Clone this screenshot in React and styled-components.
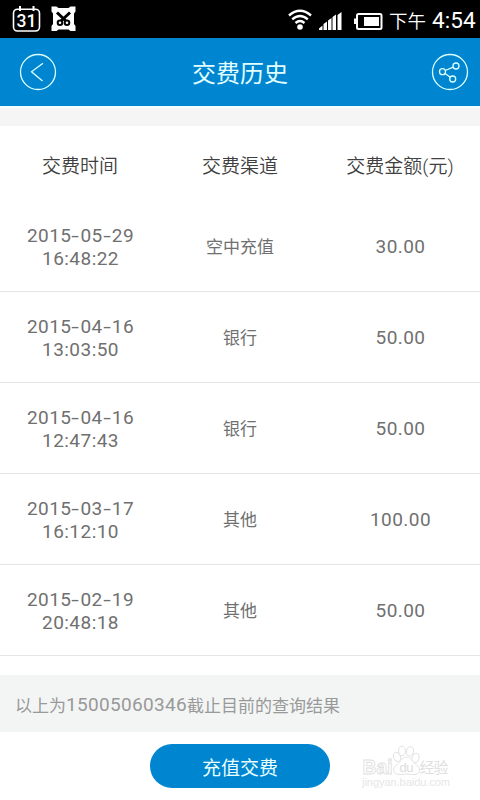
import React from "react";
import styled, { createGlobalStyle } from "styled-components";

const Global = createGlobalStyle`
  * { box-sizing: border-box; }
  body { margin: 0; background: #fff; font-family: Roboto, "Noto Sans CJK SC", sans-serif; }
`;

const Screen = styled.div`
  width: 480px;
  height: 800px;
  display: flex;
  flex-direction: column;
  overflow: hidden;
  background: #fff;
`;

const StatusBar = styled.div`
  height: 38px;
  flex: none;
  display: flex;
  justify-content: space-between;
  background: #000;
  color: #fff;
`;

const StatusGroup = styled.div`
  display: flex;
  align-items: center;
  white-space: nowrap;
`;

const Period = styled.span`
  font-size: 18.5px;
  font-weight: 350;
  line-height: 38px;
  margin: 5px 0 0 5px;
`;

const Clock = styled.span`
  font-size: 22.5px;
  line-height: 38px;
  letter-spacing: 0.1px;
  width: 48px;
  margin: 1px 0 0 6px;
`;

const TitleBar = styled.header`
  height: 68px;
  flex: none;
  display: flex;
  align-items: center;
  justify-content: space-between;
  padding: 0 11px 0 19px;
  background: #0085d0;
`;

const Title = styled.h1`
  margin: 3px 8px 0 0;
  font-size: 24px;
  line-height: 36px;
  font-weight: 400;
  color: #e2ffff;
`;

const IconButton = styled.button`
  width: 38px;
  height: 38px;
  padding: 0;
  border: 0;
  background: none;
  svg { display: block; }
`;

const Divider = styled.div`
  height: 20px;
  flex: none;
  background: #f5f5f5;
  border-top: 2px solid #f0ffff;
`;

const Row = styled.div`
  height: ${(p) => (p.$head ? 75 : 91)}px;
  flex: none;
  display: grid;
  grid-template-columns: repeat(3, 1fr);
  align-items: center;
  text-align: center;
  color: ${(p) => (p.$head ? "#404040" : "#707070")};
  border-bottom: ${(p) => (p.$head ? "0" : "1px solid #e5e5e5")};
`;

const HeadCell = styled.div`
  font-size: 19px;
  line-height: 28px;
  padding-top: 6px;
  font-weight: 350;
`;

const Numeric = styled.div`
  font-size: 19px;
  line-height: 23px;
  letter-spacing: 0.45px;
  padding: 1px 0 0 1px;
`;

const Dash = styled.span`
  display: inline-block;
  width: 9px;
  transform: scaleX(1.45);
`;

const Channel = styled.div`
  font-size: 17px;
  line-height: 24px;
  padding-top: 1px;
`;

const Note = styled.div`
  height: 57px;
  flex: none;
  display: flex;
  align-items: center;
  margin-top: 19px;
  padding: 1px 15px 0;
  background: #f3f5f5;
  color: #999;
  font-size: 17px;
  white-space: nowrap;
`;

const Phone = styled.span`
  font-size: 19px;
  letter-spacing: 0.32px;
`;

const Footer = styled.footer`
  height: 68px;
  display: grid;
  grid-template-columns: 150px 180px 150px;
  padding-top: 12px;
`;

const PayButton = styled.button`
  grid-column: 2;
  height: 44px;
  padding: 5px 0 0;
  border: 0;
  border-radius: 22px;
  background: #0085d0;
  color: #e8ffff;
  font: 400 19px/28px Roboto, "Noto Sans CJK SC", sans-serif;
`;

const Watermark = styled.svg`
  display: block;
  margin: 0 0 0 30px;
`;

const CalendarIcon = () => (
  <svg width="30" height="38" viewBox="0 0 30 38">
    <rect x="1.5" y="9.2" width="26" height="21.8" rx="4" fill="none" stroke="#fff" strokeWidth="1.6" />
    <path d="M8 6v5M21.5 6v5" stroke="#fff" strokeWidth="2" />
    <text x="14.5" y="26.8" fill="#fff" fontSize="17.5" fontWeight="500" textAnchor="middle" fontFamily="Roboto, sans-serif">31</text>
  </svg>
);

const ScissorsIcon = () => (
  <svg width="26" height="38" viewBox="0 0 26 38">
    <path d="M0.5 6.5h5l2 1.5h10l2-1.5h5v5l-1.5 2v10.5l1.5 2v5h-5l-2-1.5h-10l-2 1.5h-5v-5l1.5-2V13.5l-1.5-2z" fill="#fff" />
    <path d="M6 12.500L15 21M19 12.500L10 21" stroke="#000" strokeWidth="3" />
    <circle cx="9" cy="22.8" r="2.3" fill="#fff" stroke="#000" strokeWidth="2" />
    <circle cx="16" cy="22.8" r="2.3" fill="#fff" stroke="#000" strokeWidth="2" />
  </svg>
);

const SignalIcons = () => (
  <svg width="96" height="38" viewBox="0 0 96 38">
    <g fill="none" stroke="#fff" strokeWidth="2.4">
      <path d="M1 15.5Q12 6 23 15.5" />
      <path d="M4.2 19.3Q12 12.5 19.8 19.3" />
      <path d="M7.5 23Q12 19.2 16.5 23" />
    </g>
    <circle cx="12" cy="27" r="2.8" fill="#fff" />
    <path d="M31 30v-1.5l3.500-3v4.500zM35.500 30v-6l3.500-2.500V30zM40 30V20.500l3.500-2.500v12zM44.500 30V17l3.500-2.500V30zM49.500 30V15l4-3V30z" fill="#fff" />
    <rect x="69" y="14" width="24.5" height="15" rx="1.5" fill="none" stroke="#fff" strokeWidth="2" />
    <rect x="66" y="18.5" width="3" height="5.5" fill="#fff" />
    <rect x="76" y="17" width="15" height="9" fill="#fff" />
  </svg>
);

const BackIcon = () => (
  <svg width="38" height="38" viewBox="0 0 38 38" fill="none" stroke="#dcffff" strokeWidth="1.3">
    <circle cx="19" cy="19" r="17.5" />
    <path d="M24 10.3L12.5 18.7L23.5 28" />
  </svg>
);

const ShareIcon = () => (
  <svg width="38" height="38" viewBox="0 0 38 38" fill="none" stroke="#dcffff" strokeWidth="1.3">
    <circle cx="19" cy="19" r="17.5" />
    <circle cx="11.5" cy="18.7" r="3" />
    <circle cx="25" cy="13" r="3" />
    <circle cx="21.7" cy="26" r="3" />
    <path d="M14.3 17.5L22.2 14.2M13.9 20.5L19.4 24.2" />
  </svg>
);

const BaiduWatermark = () => (
  <Watermark width="100" height="48" viewBox="0 0 100 48">
    <g fill="#fff" stroke="#e0e0e0" strokeWidth="0.9">
      <ellipse cx="37" cy="13" rx="3.4" ry="4.7" transform="rotate(-18 37 13)" />
      <ellipse cx="42" cy="7" rx="3.4" ry="4.7" />
      <ellipse cx="50" cy="7.3" rx="3.4" ry="4.7" transform="rotate(12 50 7.3)" />
      <ellipse cx="55.5" cy="14" rx="3.4" ry="4.7" transform="rotate(15 55.5 14)" />
      <path d="M46.5 13C41 13 41 18.5 36.500 21C31 25 34 31 40 30.500Q46.500 29.500 52.500 30.500C60 31.500 61.500 25 57 21.500C52 18 52 13 46.500 13Z" />
      <text x="2.5" y="29.5" fontFamily="Liberation Sans, sans-serif" fontWeight="700" fontSize="21" textLength="30" lengthAdjust="spacingAndGlyphs">Bai</text>
      <text x="39.5" y="28" fontFamily="Liberation Sans, sans-serif" fontSize="13" textLength="14" fill="#dcdcdc" stroke="none">du</text>
      <text x="59.5" y="29" fontFamily="Noto Sans CJK SC, sans-serif" fontWeight="400" fontSize="15" fill="#e0e0e0" stroke="none" textLength="29">经验</text>
    </g>
    <text x="2" y="42" fill="#e6e6e6" fontFamily="Liberation Sans, sans-serif" fontSize="11" textLength="88">jingyan.baidu.com</text>
  </Watermark>
);

const IconsLeft = styled(StatusGroup)`
  padding-left: 12px;
  gap: 9px;
`;

const payments = [
  ["2015-05-29", "16:48:22", "空中充值", "30.00"],
  ["2015-04-16", "13:03:50", "银行", "50.00"],
  ["2015-04-16", "12:47:43", "银行", "50.00"],
  ["2015-03-17", "16:12:10", "其他", "100.00"],
  ["2015-02-19", "20:48:18", "其他", "50.00"],
];

const DateText = ({ value }) =>
  value.split("-").map((part, i) => (
    <React.Fragment key={i}>
      {i > 0 && <Dash>-</Dash>}
      {part}
    </React.Fragment>
  ));

export default function App() {
  return (
    <Screen>
      <Global />
      <StatusBar>
        <IconsLeft>
          <CalendarIcon />
          <ScissorsIcon />
        </IconsLeft>
        <StatusGroup>
          <SignalIcons />
          <Period>下午</Period>
          <Clock>4:54</Clock>
        </StatusGroup>
      </StatusBar>
      <TitleBar>
        <IconButton aria-label="返回"><BackIcon /></IconButton>
        <Title>交费历史</Title>
        <IconButton aria-label="分享"><ShareIcon /></IconButton>
      </TitleBar>
      <Divider />
      <Row $head>
        <HeadCell>交费时间</HeadCell>
        <HeadCell>交费渠道</HeadCell>
        <HeadCell>交费金额(元)</HeadCell>
      </Row>
      {payments.map(([date, time, channel, amount]) => (
        <Row key={date + time}>
          <Numeric>
            <DateText value={date} />
            <br />
            {time}
          </Numeric>
          <Channel>{channel}</Channel>
          <Numeric>{amount}</Numeric>
        </Row>
      ))}
      <Note>
        以上为<Phone>15005060346</Phone>截止目前的查询结果
      </Note>
      <Footer>
        <PayButton>充值交费</PayButton>
        <BaiduWatermark />
      </Footer>
    </Screen>
  );
}
